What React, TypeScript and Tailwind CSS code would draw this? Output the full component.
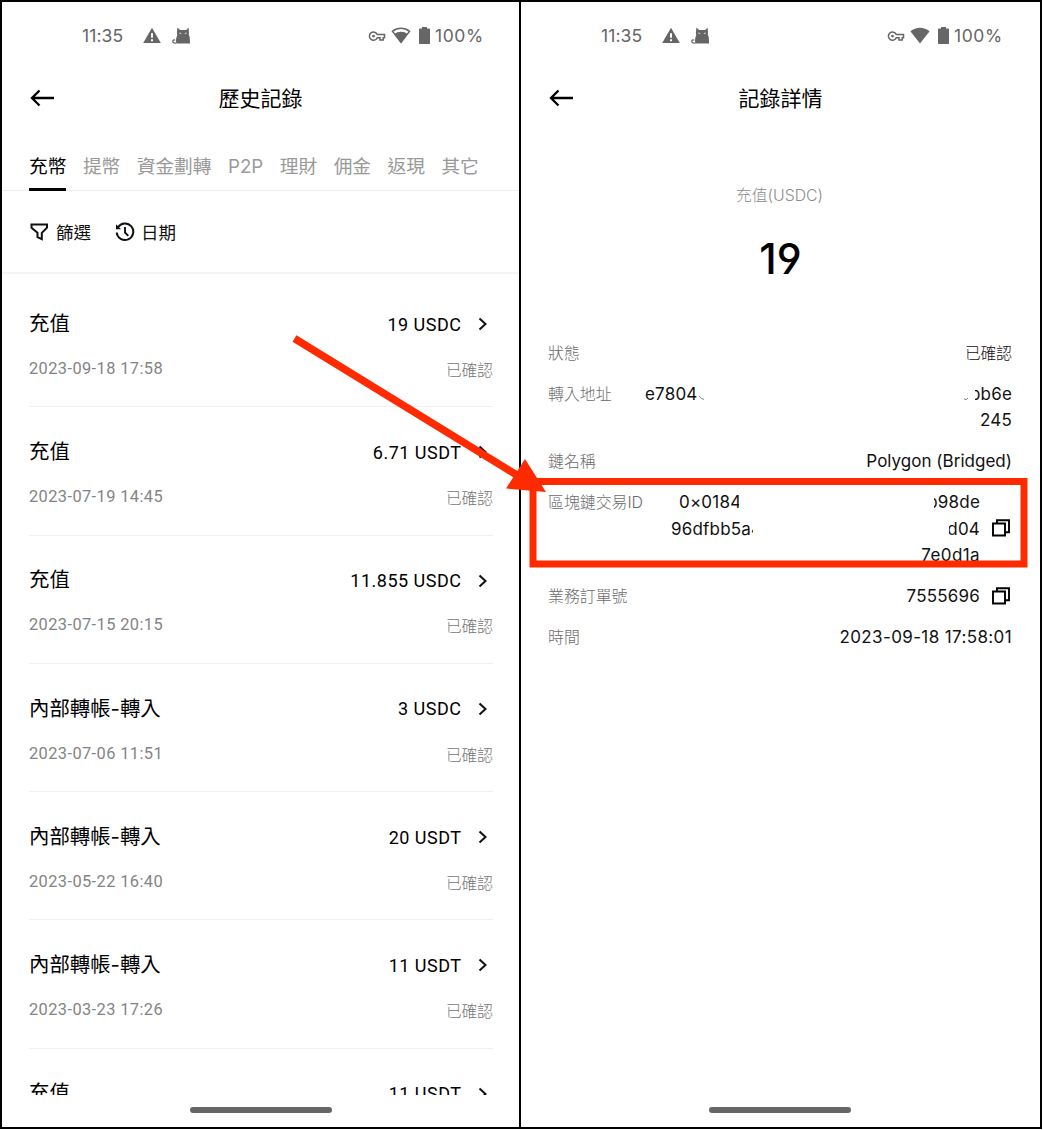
import React from 'react';

const cjk = "font-['Inter','Noto_Sans_CJK_TC',sans-serif]";

function WarningIcon() {
  return (
    <svg className="mb-[1px] ml-[19.5px] h-[17px] w-[18px]" viewBox="0 0 18 17">
      <path fill="#666" d="M9 0.7 17.8 16H0.2Z" />
      <path fill="#fff" d="M8 6.2h2v4.6H8zM8 12.2h2v2H8z" />
    </svg>
  );
}

function CatIcon() {
  return (
    <svg className="mb-[1px] ml-[11px] h-[18px] w-[19px]" viewBox="0 0 19 18">
      <path
        fill="#666"
        d="M5.4 0.4 8.2 2.9h6L16.6 0.4l.4 5.2-.2 2.2c.9 1.4 1.2 4 1.2 6.5V16.6H6.4c-1.8 0-2.6-1-2.4-3.2.2-2.5.5-3.9 1.200-5L4.900 5.600Z"
      />
      <path d="M4.5 16.1c-3 .3-4.300-1.100-3.500-2.500.5-.8 1.600-.9 2-.2" fill="none" stroke="#666" strokeWidth="1.2" />
      <path fill="#fff" d="m7.300 5.400 2.300.9-1.700.6zM14.700 5.400l-2.300.9 1.700.6z" />
    </svg>
  );
}

function StatusBar({ full }: { full?: boolean }) {
  return (
    <div
      className={`flex h-[68px] items-center pl-[80px] font-['Inter'] text-[17.5px] text-[#666] ${full ? 'pr-[36.5px]' : 'pr-[34.5px]'}`}
    >
      <span className="w-[41.5px] tracking-[0.1px]">11:35</span>
      <WarningIcon />
      <CatIcon />
      <div className="ml-auto flex items-center">
        <svg className="h-[12px] w-[18px]" viewBox="0 0 18 12">
          <path
            d="M9.3 4.6A4.1 4.1 0 1 0 9.3 7.7H12V10.1H15.2V7.7H16.5V4.6Z"
            fill="none"
            stroke="#666"
            strokeWidth="1.5"
          />
          <circle cx="5.5" cy="6.1" r="1.4" fill="#666" />
        </svg>
        <svg className="mb-[1px] ml-[5px] h-[17px] w-[20px]" viewBox="0 0 20 17">
          {full ? (
            <path fill="#666" d="M10 16.5 .4 4.3C6-.6 14-.6 19.6 4.3Z" />
          ) : (
            <>
              <path fill="none" stroke="#666" strokeWidth="1.5" d="M10 15 1.5 4.4C6.3.2 13.7.2 18.5 4.4Z" />
              <path fill="#666" d="M10 16.5 3.2 7.3C6.8 4 13.2 4 16.8 7.3Z" />
            </>
          )}
        </svg>
        <svg className="mb-[1px] ml-[8px] h-[17px] w-[11px]" viewBox="0 0 11 17">
          <path fill="#666" d="M3 0h5v1.5h2.3q.7 0 .7.7v14.1q0 .7-.7.7H.7q-.7 0-.7-.7V2.2q0-.7.7-.7H3z" />
        </svg>
        <span className="ml-[5px] w-[49.5px] whitespace-nowrap tracking-[0.6px]">100%</span>
      </div>
    </div>
  );
}

function Header({ title }: { title: string }) {
  return (
    <div className="grid h-[56px] grid-cols-[80px_1fr_80px] items-center">
      <svg className="ml-[28px] h-[18px] w-[25px]" viewBox="0 0 25 18">
        <path d="M24 9H2M9.5 1.5 2 9l7.5 7.5" fill="none" stroke="#000" strokeWidth="2.3" />
      </svg>
      <h1 className="pt-[2px] text-center text-[21px] leading-[30px]">{title}</h1>
    </div>
  );
}

function HomeBar() {
  return <div className="h-[6px] w-[142px] rounded-full bg-[#666]" />;
}

const tabs = ['充幣', '提幣', '資金劃轉', 'P2P', '理財', '佣金', '返現', '其它'];

const records = [
  ['充值', '2023-09-18 17:58', '19 USDC'],
  ['充值', '2023-07-19 14:45', '6.71 USDT'],
  ['充值', '2023-07-15 20:15', '11.855 USDC'],
  ['內部轉帳-轉入', '2023-07-06 11:51', '3 USDC'],
  ['內部轉帳-轉入', '2023-05-22 16:40', '20 USDT'],
  ['內部轉帳-轉入', '2023-03-23 17:26', '11 USDT'],
  ['充值', '', '11 USDT'],
];

function HistoryPanel() {
  return (
    <section className="flex w-[519px] flex-col border-r-2 border-black">
      <StatusBar />
      <Header title="歷史記錄" />
      <nav className="mt-[19px] flex h-[46px] gap-[16.5px] border-b border-[#eee] pl-[27px] text-[18.7px] leading-[44px] text-[#999]">
        {tabs.map((t, i) => (
          <span key={t} className={i === 0 ? 'h-[46px] border-b-[3px] border-black text-black' : 'h-[46px]'}>
            {t}
          </span>
        ))}
      </nav>
      <div className="flex h-[83px] items-center border-b-2 border-[#f5f5f5] pt-[1px] pl-[28px] text-[17.5px] text-[#111]">
        <svg className="h-[18px] w-[19px]" viewBox="0 0 19 18">
          <path
            d="M1.5 1.5h15.5v3.2L11.8 9.8v6.4l-4.3-2V9.8L1.5 4.7Z"
            fill="none"
            stroke="#111"
            strokeWidth="2"
          />
        </svg>
        <span className="ml-[7px] pt-[2px]">篩選</span>
        <svg className="ml-[24px] h-[20px] w-[20px]" viewBox="0 0 20 20">
          <path d="M3 5.2A8.3 8.3 0 1 1 1.7 10.5" fill="none" stroke="#111" strokeWidth="2" />
          <path d="M1 2.2V7.2H6Z" fill="#111" />
          <path d="M10 5v5.5l3.3 3.3" fill="none" stroke="#111" strokeWidth="1.9" />
        </svg>
        <span className="ml-[6px] pt-[2px]">日期</span>
      </div>
      <div className="mt-[5px] h-[816px] overflow-hidden pr-[26px] pl-[27px]">
        {records.map(([title, time, amount], i) => (
          <div key={i} className="flex h-[128.3px] flex-col border-b-[1.5px] border-[#f0f0f0] pt-[29px]">
            <div className="flex h-[32px] items-center">
              <span className="text-[20.4px]">{title}</span>
              <span className="ml-auto font-['Roboto'] text-[18px] tracking-[0.5px]">{amount}</span>
              <svg className="mr-[5px] ml-[16.5px] h-[14px] w-[10px]" viewBox="0 0 10 14">
                <path d="M1.5 1.5 7.5 7 1.5 12.5" fill="none" stroke="#111" strokeWidth="2" />
              </svg>
            </div>
            {time && (
              <div className="mt-[17px] flex h-[24px] items-center text-[15.7px] text-[#848484]">
                <span className="font-['Roboto'] text-[16.4px] tracking-[0.4px]">{time}</span>
                <span className="ml-auto pt-[3px] font-light text-[#777]">已確認</span>
              </div>
            )}
          </div>
        ))}
      </div>
      <div className="mt-[12px] ml-[188px]">
        <HomeBar />
      </div>
    </section>
  );
}

function CopyIcon() {
  return (
    <svg className="mr-px mb-px ml-[12px] h-[18px] w-[19px] shrink-0" viewBox="0 0 19 18">
      <path d="M1 4.5h12v12H1zM5 4V1.2h12v12h-3.5" fill="none" stroke="#000" strokeWidth="1.9" />
    </svg>
  );
}

function Clip({ text, right, wide }: { text: string; right?: boolean; wide: string }) {
  return (
    <span className={`flex shrink-0 overflow-hidden whitespace-nowrap ${wide} ${right ? 'justify-end' : ''}`}>
      <span>{text}</span>
    </span>
  );
}

function Row({ label, children }: { label: string; children: React.ReactNode }) {
  return (
    <div className="flex items-start">
      <span className="-mb-px shrink-0 pt-px text-[15.9px] font-light text-[#6c6c6c]">{label}</span>
      <div className="ml-auto flex items-center text-right text-[17px] text-[#111] tracking-[0.2px]">{children}</div>
    </div>
  );
}

function DetailPanel() {
  return (
    <section className="flex w-[519px] flex-col">
      <StatusBar full />
      <Header title="記錄詳情" />
      <div className="mt-[58px] pr-[2px] text-center text-[15.8px] leading-[24px] font-light text-[#8c8c8c]">
        充值(USDC)
      </div>
      <div className="mt-[25px] text-center font-['Inter'] text-[42px] leading-[52px] font-medium [font-feature-settings:'ss01']">
        19
      </div>
      <div className="mt-[54.7px] flex flex-col gap-[14.3px] pr-[28px] pl-[27px] leading-[26.6px]">
        <Row label="狀態">
          <span className="-mb-px pt-px text-[15.7px] font-light tracking-normal">已確認</span>
        </Row>
        <Row label="轉入地址">
          <div className="w-[367px]">
            <div className="flex items-center">
              <Clip text="e7804" wide="w-[53px]" />
              <svg className="mt-[8px] h-[6px] w-[8px]" viewBox="0 0 8 6">
                <path d="M1 1q2 3 5 3.5" fill="none" stroke="#888" />
              </svg>
              <svg className="mt-[8px] ml-auto h-[6px] w-[7px]" viewBox="0 0 7 6">
                <path d="M1 4q3 1.5 4-1" fill="none" stroke="#777" />
              </svg>
              <span className="ml-[5px]">
                <Clip text="bb6e" right wide="w-[37px]" />
              </span>
            </div>
            <div>245</div>
          </div>
        </Row>
        <Row label="鏈名稱">
          <span className="tracking-[0.02px]">Polygon (Bridged)</span>
        </Row>
        <Row label="區塊鏈交易ID">
          <div className="w-[309px]">
            <div className="flex justify-between pl-[8px]">
              <Clip text="0×0184" wide="w-[60px]" />
              <Clip text="b98de" right wide="w-[46px]" />
            </div>
            <div className="flex justify-between">
              <Clip text="96dfbb5a4" wide="w-[82px]" />
              <Clip text="d04" right wide="w-[31px]" />
            </div>
            <div className="tracking-[0.4px]">7e0d1a</div>
          </div>
          <CopyIcon />
        </Row>
        <Row label="業務訂單號">
          7555696
          <CopyIcon />
        </Row>
        <Row label="時間">
          <span className="tracking-[0.38px]">2023-09-18 17:58:01</span>
        </Row>
      </div>
      <div className="mt-auto mb-[14px] ml-[188px]">
        <HomeBar />
      </div>
    </section>
  );
}

export default function App() {
  return (
    <div className="h-[1130px] w-[1043px] bg-white">
      <main
        lang="zh-Hant"
        className={`relative flex h-[1129px] w-[1042px] overflow-hidden border-2 border-black bg-white text-black ${cjk}`}
      >
        <HistoryPanel />
        <DetailPanel />
        <svg className="absolute top-[-2px] left-[-2px] h-[1130px] w-[1043px]" viewBox="0 0 1043 1130">
          <rect x="533" y="481.5" width="491" height="82.5" fill="none" stroke="#ff2a00" strokeWidth="7" />
          <path d="M294.5 338.5 520 477" stroke="#ff2a00" strokeWidth="7.5" />
          <path d="M525 459 546 492 506 488.5Z" fill="#ff2a00" />
        </svg>
      </main>
    </div>
  );
}
